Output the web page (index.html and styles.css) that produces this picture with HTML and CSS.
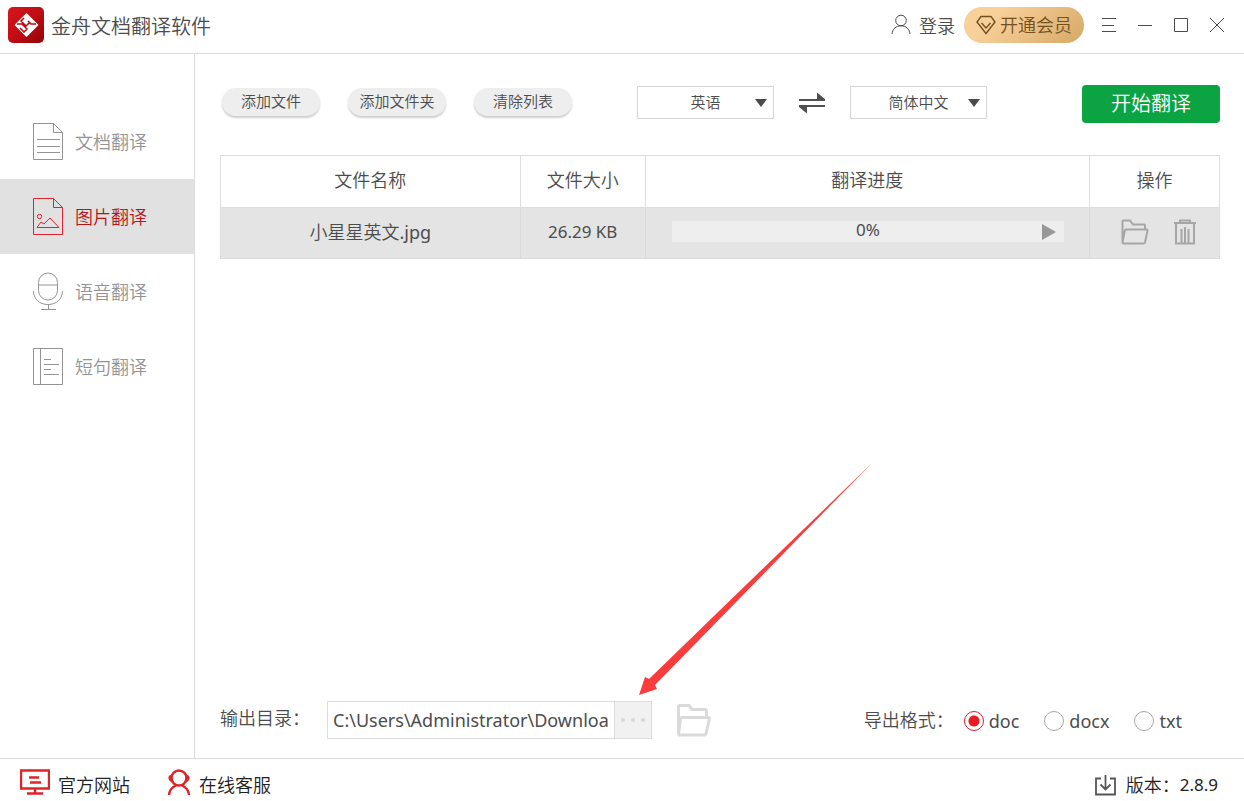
FILE: index.html
```html
<!DOCTYPE html>
<html lang="zh-CN">
<head>
<meta charset="utf-8">
<meta name="viewport" content="width=device-width, initial-scale=1">
<title>金舟文档翻译软件</title>
<link rel="stylesheet" href="styles.css">
</head>
<body>
<div class="app">
  <header class="titlebar">
    <svg class="logo" viewBox="0 0 36 36" aria-hidden="true">
      <defs><linearGradient id="logoFill" x1="0" y1="0" x2="1" y2="1"><stop offset="0" stop-color="#d8161d"/><stop offset=".5" stop-color="#c00d13"/><stop offset="1" stop-color="#8f0509"/></linearGradient></defs>
      <rect width="36" height="36" rx="5" fill="url(#logoFill)"/>
      <path d="M18.500 7 29.500 18 18.500 29 7.500 18z" fill="#fff" stroke="#fff" stroke-width="1.500" stroke-linejoin="round"/>
      <path d="M9 17h5l5 5-3 3-4-4M16 11l-3 3 5 5 3-3M28 17h-5l-3-3" fill="none" stroke="#b80c12" stroke-width="1.600" stroke-linejoin="round"/>
    </svg>
    <h1 class="title">金舟文档翻译软件</h1>
    <button class="login" type="button">
      <svg width="20" height="21" viewBox="0 0 20 21" aria-hidden="true"><circle cx="10" cy="6.500" r="5.300"/><path d="M1 20c.5-5 4-8.200 9-8.200s8.500 3.200 9 8.200"/></svg>
      <span>登录</span>
    </button>
    <button class="vip" type="button">
      <svg width="20" height="20" viewBox="0 0 20 20" aria-hidden="true"><path d="M5 1.500h10l4 5.500-9 11.500L1 7z"/><path d="M5.500 8l4.500 5 4.500-5"/></svg>
      开通会员
    </button>
    <div class="window-controls">
      <button type="button" aria-label="菜单"><svg width="16" height="16" viewBox="0 0 16 16"><path d="M1 1.500h14M1 8.500h12M1 14.500h14"/></svg></button>
      <button type="button" aria-label="最小化"><svg width="16" height="16" viewBox="0 0 16 16"><path d="M1 8.500h14"/></svg></button>
      <button type="button" aria-label="最大化"><svg width="16" height="16" viewBox="0 0 16 16"><path d="M1.500 1.500h13v13h-13z"/></svg></button>
      <button type="button" aria-label="关闭"><svg width="16" height="16" viewBox="0 0 16 16"><path d="M1 1l14 14M15 1L1 15"/></svg></button>
    </div>
  </header>

  <div class="body">
    <nav class="sidebar">
      <a class="nav-item" href="#document">
        <svg width="32" height="39" viewBox="0 0 32 39" aria-hidden="true"><path d="M1.500 1.500h20l9 9v27h-29zM21.500 1.500v9h9M5 17.500h23M5 24.500h23M5 30.500h23"/></svg>文档翻译</a>
      <a class="nav-item active" href="#image" aria-current="page">
        <svg width="32" height="39" viewBox="0 0 32 39" aria-hidden="true"><path d="M1.500 1.500h20l9 9v27h-29zM21.500 1.500v9h9M5 30.500l4-5.500 3 2 6-6 9 9.500z"/><circle cx="7.500" cy="19.500" r="2.200"/></svg>图片翻译</a>
      <a class="nav-item" href="#voice">
        <svg width="32" height="39" viewBox="0 0 32 39" aria-hidden="true"><rect x="6.500" y="1" width="19" height="27" rx="9.500"/><path d="M6.500 13h19M1.500 19c0 8 6 13.500 14.500 13.500S30.500 27 30.500 19M16.500 32.500v5M9 37.500h15"/></svg>语音翻译</a>
      <a class="nav-item" href="#phrase">
        <svg width="32" height="39" viewBox="0 0 32 39" aria-hidden="true"><path d="M1.500 1.500h29v36h-29zM8.500 1.500v36M12 12.500h7M12 17.500h15M12 22.500h7M12 27.500h15"/></svg>短句翻译</a>
    </nav>

    <main class="main">
      <div class="toolbar">
        <div class="file-actions">
          <button class="pill" type="button">添加文件</button>
          <button class="pill" type="button">添加文件夹</button>
          <button class="pill" type="button">清除列表</button>
        </div>
        <div class="languages">
          <div class="select">
            <select aria-label="源语言"><option>英语</option></select>
            <svg width="12" height="8" viewBox="0 0 12 8" aria-hidden="true"><path d="M0 0h12L6 8z"/></svg>
          </div>
          <button class="swap" type="button" aria-label="交换语言">
            <svg width="26" height="22" viewBox="0 0 26 22" aria-hidden="true"><path d="M0 7h18V0.500l8 6.500v2H0zM26 13v2H8v6.500L0 15v-2z"/></svg>
          </button>
          <div class="select">
            <select aria-label="目标语言"><option>简体中文</option></select>
            <svg width="12" height="8" viewBox="0 0 12 8" aria-hidden="true"><path d="M0 0h12L6 8z"/></svg>
          </div>
        </div>
        <button class="start" type="button">开始翻译</button>
      </div>

      <table class="files">
        <colgroup><col class="col-name"><col class="col-size"><col class="col-progress"><col class="col-actions"></colgroup>
        <thead><tr><th scope="col">文件名称</th><th scope="col">文件大小</th><th scope="col">翻译进度</th><th scope="col">操作</th></tr></thead>
        <tbody>
          <tr>
            <td>小星星英文<span class="latin">.jpg</span></td>
            <td class="latin size">26.29 KB</td>
            <td class="progress-cell">
              <div class="progress">
                <span class="percent latin">0%</span>
                <button type="button" aria-label="开始"><svg width="14" height="16" viewBox="0 0 14 16"><path d="M0 0l14 8-14 8z" fill="#979797"/></svg></button>
              </div>
            </td>
            <td>
              <div class="row-actions">
                <button type="button" aria-label="打开文件夹"><svg width="28" height="26" viewBox="0 0 28 26"><path d="M1.500 24V2.500Q1.500 1.500 2.500 1.500H9l3 4h11q1 0 1 1V10M5 10.500h20.500q1.200 0 1 1L24 23.500q-.3 1-1.500 1h-20q-1 0-1-1L3.800 11.500q.2-1 1.200-1z"/></svg></button>
                <button type="button" aria-label="删除"><svg width="24" height="26" viewBox="0 0 24 26"><path d="M1 4h22M7 3V1.500h10V3M3 4v20.500h18V4M8.500 10v14M12 8v16M15.500 10v14"/></svg></button>
              </div>
            </td>
          </tr>
        </tbody>
      </table>

      <div class="output">
        <label class="output-label" for="output-path">输出目录：</label>
        <div class="path">
          <div class="path-field"><input class="latin" id="output-path" type="text" value="C:\Users\Administrator\Downloads"></div>
          <button class="browse" type="button" aria-label="浏览"><svg width="26" height="6" viewBox="0 0 26 6"><circle cx="3" cy="3" r="2"/><circle cx="13" cy="3" r="2"/><circle cx="23" cy="3" r="2"/></svg></button>
        </div>
        <button class="open-folder" type="button" aria-label="打开输出目录"><svg width="34" height="33" viewBox="0 0 34 33"><path d="M1.500 29V2.500q0-1 1-1H12l3 4h13q1.500 0 1.500 1.500v6M5 13.500h26q1.700 0 1.400 1.500L29 29.500q-.3 1.500-1.800 1.500H3q-1.500 0-1.400-1.500L3.500 15q.2-1.500 1.500-1.500z"/></svg></button>
        <fieldset class="formats">
          <legend>导出格式：</legend>
          <label class="latin"><input type="radio" name="format" checked>doc</label>
          <label class="latin"><input type="radio" name="format">docx</label>
          <label class="latin"><input type="radio" name="format">txt</label>
        </fieldset>
      </div>
    </main>
  </div>

  <footer class="footer">
    <a href="#site"><svg width="30" height="26" viewBox="0 0 30 26" aria-hidden="true"><path d="M1 1.500h28v18H1zM15 19.500V24M7 24.500h16M9 8.500h10M10 13.500h11"/></svg>官方网站</a>
    <a href="#support"><svg width="24" height="26" viewBox="0 0 24 26" aria-hidden="true"><circle cx="12" cy="9" r="7.500"/><path d="M2 26c.5-5 3.500-8 7-9.500M22 26c-.5-5-3.500-8-7-9.500"/><path d="M4.500 7C2 7.500 2 10.500 4.500 12zM19.500 7c2.500.5 2.500 3.500 0 5z" fill="#e02327"/></svg>在线客服</a>
    <span class="version"><svg width="21" height="22" viewBox="0 0 21 22" aria-hidden="true"><path d="M6 4.500H1v16h19v-16h-5M10.500 1v14M5.500 10.500l5 5 5-5"/></svg>版本：<span class="version-number latin">2.8.9</span></span>
  </footer>

  <svg class="pointer-arrow" width="234" height="233" viewBox="0 0 234 233" aria-hidden="true"><path d="M233 0 10 216 6 214 0 232 18 226 16 222z"/></svg>
</div>
</body>
</html>
```

FILE: styles.css
```css
* { box-sizing: border-box; }
body {
  margin: 0;
  background: #fff;
  color: #4c4c4c;
  font: 350 18px/24px "Noto Sans", "Noto Sans CJK SC", sans-serif;
}
button, input, select {
  margin: 0;
  padding: 0;
  border: 0;
  background: none;
  color: inherit;
  font: inherit;
}
button { display: inline-flex; align-items: center; justify-content: center; cursor: pointer; }
a { color: inherit; text-decoration: none; }
svg { display: block; flex: none; fill: none; stroke: currentColor; }
.latin { font-weight: 400; }
.app { position: relative; display: flex; flex-direction: column; min-height: 100vh; }

.titlebar {
  display: flex;
  align-items: center;
  height: 54px;
  padding: 0 19px 4px 8px;
  border-bottom: 1px solid #dcdcdc;
}
.logo { width: 36px; height: 36px; stroke: none; }
.title { margin: 0 auto 0 7px; padding-top: 4px; font-size: 20px; font-weight: 350; }
.login { gap: 8px; }
.login span { padding-top: 2px; }
.vip {
  gap: 4px;
  width: 120px;
  height: 36px;
  margin-left: 9px;
  border-radius: 18px;
  background: linear-gradient(135deg, #f8d09a 25%, #d5a866);
  color: #74501f;
}
.vip svg { stroke-width: 1.4; }
.window-controls { display: flex; gap: 20px; margin-left: 17px; }

.body { display: flex; flex: 1; }
.sidebar { width: 195px; flex: none; padding-top: 50px; border-right: 1px solid #dcdcdc; }
.nav-item {
  display: flex;
  align-items: center;
  gap: 11px;
  height: 75px;
  padding-left: 32px;
  color: #949494;
}
.nav-item.active { background: #e1e1e1; color: #b9141a; }
.nav-item.active svg { color: #e0232b; }

.main { display: flex; flex: 1; flex-direction: column; min-width: 0; padding: 31px 24px 19px 25px; }
.toolbar { display: flex; align-items: flex-start; }
.file-actions { display: flex; gap: 28px; padding: 3px 0 0 2px; }
.pill {
  width: 98px;
  height: 28px;
  padding-bottom: 2px;
  border-radius: 14px;
  background: #eee;
  box-shadow: 0 2px 2px #cfcfcf;
  font-size: 15px;
}
.languages { display: flex; align-items: center; gap: 25px; margin-left: 65px; padding-top: 1px; }
.select { position: relative; width: 137px; }
.select select {
  display: block;
  width: 100%;
  height: 33px;
  padding-bottom: 2px;
  border: 1px solid #d6d6d6;
  appearance: none;
  background: #fff;
  font-size: 15px;
  text-align-last: center;
}
.select svg { position: absolute; top: 13px; right: 7px; fill: #4a4a4a; stroke: none; pointer-events: none; }
.swap svg { fill: #505050; stroke: none; }
.start {
  width: 138px;
  height: 38px;
  margin-left: auto;
  border-radius: 4px;
  background: #0ca443;
  color: #fff;
  font-size: 20px;
}

.files { width: 100%; margin-top: 32px; border-collapse: collapse; table-layout: fixed; }
.files th, .files td { height: 52px; padding: 0 0 2px; border: 1px solid #dedede; font-weight: 350; text-align: center; }
.files th { padding-bottom: 4px; }
.files td { height: 51px; background: #e4e4e4; border-color: #dadada; }
.files td.size { font-size: 17px; font-weight: 400; }
.col-name { width: 30%; }
.col-size { width: 125px; }
.col-actions { width: 130px; }
.files .progress-cell { padding: 0 25px 3px 26px; }
.progress {
  display: grid;
  grid-template-columns: 14px 1fr 14px;
  align-items: center;
  height: 21px;
  padding: 0 8px;
  background: #eee;
}
.percent { grid-column: 2; padding-bottom: 3px; font-size: 17px; line-height: 18px; }
.progress svg { stroke: none; }
.row-actions { display: flex; justify-content: center; gap: 24px; padding-left: 8px; color: #a6a6a6; }
.row-actions svg { stroke-width: 2; }

.output { display: flex; align-items: center; margin-top: auto; }
.output-label { padding-bottom: 5px; }
.path { display: flex; width: 325px; height: 38px; margin-left: 17px; border: 1px solid #dcdcdc; }
.path-field { flex: 1; min-width: 0; padding: 0 6px 0 5px; }
.path-field input { display: block; width: 100%; height: 36px; outline: 0; }
.browse { width: 37px; border-left: 1px solid #dcdcdc; background: #f1f1f1; }
.browse svg { fill: #d6d6d6; stroke: none; }
.open-folder { margin-left: 25px; color: #dadada; }
.open-folder svg { stroke-width: 3; }
.formats { display: flex; align-items: center; gap: 25px; margin: 0 38px 0 auto; padding: 0; border: 0; }
.formats legend { float: left; margin-right: -15px; padding: 0; }
.formats label { display: flex; align-items: center; gap: 5px; padding-top: 2px; }
.formats input {
  width: 20px;
  height: 20px;
  border: 1px solid #a8a8a8;
  border-radius: 50%;
  appearance: none;
}
.formats input:checked { border-color: #d5202a; background: radial-gradient(circle, #e81c24 5px, transparent 6px); }

.footer {
  display: flex;
  align-items: center;
  gap: 37px;
  height: 43px;
  padding: 10px 26px 0 20px;
  border-top: 1px solid #dcdcdc;
  color: #222;
}
.footer a, .version { display: flex; align-items: center; gap: 8px; }
.footer a svg { margin-bottom: 6px; color: #e02327; stroke-width: 2.4; }
.version { margin-left: auto; }
.version svg { color: #555; stroke-width: 1.8; margin-right: 2px; }
.version-number { margin-left: -8px; font-size: 17px; }
.pointer-arrow { position: absolute; top: 463px; left: 639px; pointer-events: none; fill: #fa3c3c; stroke: none; }
```
